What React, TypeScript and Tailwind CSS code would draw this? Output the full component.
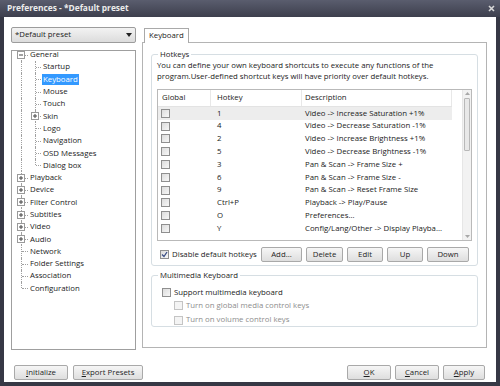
import React from "react"

const hotkeys = [
  { key: "1", desc: "Video -> Increase Saturation +1%" },
  { key: "4", desc: "Video -> Decrease Saturation -1%" },
  { key: "2", desc: "Video -> Increase Brightness +1%" },
  { key: "5", desc: "Video -> Decrease Brightness -1%" },
  { key: "3", desc: "Pan & Scan -> Frame Size +" },
  { key: "6", desc: "Pan & Scan -> Frame Size -" },
  { key: "9", desc: "Pan & Scan -> Reset Frame Size" },
  { key: "Ctrl+P", desc: "Playback -> Play/Pause" },
  { key: "O", desc: "Preferences..." },
  { key: "Y", desc: "Config/Lang/Other -> Display Playba..." },
]

type TreeItem = { label: string; level: 0 | 1; expander?: "plus" | "minus"; selected?: boolean }

const tree: TreeItem[] = [
  { label: "General", level: 0, expander: "minus" },
  { label: "Startup", level: 1 },
  { label: "Keyboard", level: 1, selected: true },
  { label: "Mouse", level: 1 },
  { label: "Touch", level: 1 },
  { label: "Skin", level: 1, expander: "plus" },
  { label: "Logo", level: 1 },
  { label: "Navigation", level: 1 },
  { label: "OSD Messages", level: 1 },
  { label: "Dialog box", level: 1 },
  { label: "Playback", level: 0, expander: "plus" },
  { label: "Device", level: 0, expander: "plus" },
  { label: "Filter Control", level: 0, expander: "plus" },
  { label: "Subtitles", level: 0, expander: "plus" },
  { label: "Video", level: 0, expander: "plus" },
  { label: "Audio", level: 0, expander: "plus" },
  { label: "Network", level: 0 },
  { label: "Folder Settings", level: 0 },
  { label: "Association", level: 0 },
  { label: "Configuration", level: 0 },
]

function Expander({ kind, left }: { kind: "plus" | "minus"; left: string }) {
  return (
    <svg width="8" height="8" viewBox="0 0 8 8" className={`absolute ${left} top-1/2 -translate-y-1/2`}>
      <rect x="0.5" y="0.5" width="7" height="7" fill="#fff" stroke="#9a9a9a" />
      <line x1="2" y1="4" x2="6" y2="4" stroke="#444" />
      {kind === "plus" && <line x1="4" y1="2" x2="4" y2="6" stroke="#444" />}
    </svg>
  )
}

function CheckBox({ checked, disabled }: { checked?: boolean; disabled?: boolean }) {
  return (
    <span
      className={`relative inline-block w-[9px] h-[9px] shrink-0 border ${
        disabled ? "border-[#c4c4c4] bg-[#f4f4f4]" : "border-[#8f8f8f] bg-gradient-to-br from-[#dcdcdc] to-[#f7f7f7]"
      }`}
    >
      {checked && (
        <svg width="7" height="7" viewBox="0 0 7 7" className="absolute left-0 top-0">
          <path d="M1 3.5 L3 5.5 L6 1" fill="none" stroke="#3b4f86" strokeWidth="1.3" />
        </svg>
      )}
    </span>
  )
}

function Button({ children, w }: { children: React.ReactNode; w: string }) {
  return (
    <button
      className={`${w} h-[15px] border border-[#a9a9a9] rounded-[2px] bg-gradient-to-b from-[#f6f6f6] to-[#dedede] text-[#1e1e1e] leading-none`}
    >
      {children}
    </button>
  )
}

function TreeRow({ item, index }: { item: TreeItem; index: number }) {
  const first = index === 0
  const last = index === tree.length - 1
  const lastChild = item.label === "Dialog box"
  return (
    <div className="flex items-center h-[12.3px]">
      <div className="relative w-[17px] h-full shrink-0">
        <span
          className={`absolute left-[9px] border-l border-dotted border-[#a0a0a0] ${first ? "top-1/2" : "top-0"} ${
            last ? "h-1/2" : "bottom-0"
          }`}
        />
        {item.level === 0 && <span className="absolute left-[10px] top-1/2 w-[6px] border-t border-dotted border-[#a0a0a0]" />}
        {item.level === 0 && item.expander && <Expander kind={item.expander} left="left-[5px]" />}
      </div>
      {item.level === 1 && (
        <div className="relative w-[13px] h-full shrink-0">
          <span
            className={`absolute left-[6px] top-0 border-l border-dotted border-[#a0a0a0] ${lastChild ? "h-1/2" : "bottom-0"}`}
          />
          <span className="absolute left-[7px] top-1/2 w-[5px] border-t border-dotted border-[#a0a0a0]" />
          {item.expander && <Expander kind={item.expander} left="left-[2px]" />}
        </div>
      )}
      <span
        className={`px-[1px] leading-[11px] whitespace-nowrap ${item.selected ? "bg-[#3399ff] text-white" : "text-[#1b1b1b]"}`}
      >
        {item.label}
      </span>
    </div>
  )
}

export default function App() {
  return (
    <div className="w-[500px] h-[386px] flex flex-col bg-[#363845] font-['Segoe_UI','Open_Sans',sans-serif] text-[7.8px] text-[#1b1b1b] overflow-hidden">
      {/* title bar */}
      <div className="h-[17px] shrink-0 flex items-center justify-between pl-[7px] pr-[5px] bg-gradient-to-b from-[#5a5d6e] to-[#3d3f4d]">
        <span className="font-bold text-[8.4px] text-[#ececec]">Preferences - *Default preset</span>
        <svg width="7" height="7" viewBox="0 0 7 7">
          <path d="M1 1 L6 6 M6 1 L1 6" stroke="#d8d8d8" strokeWidth="1.6" />
        </svg>
      </div>

      <div className="flex-1 flex flex-col mx-[4px] mb-[4px] bg-white">
        <div className="flex pt-[10px] pl-[7px] pr-[9px] h-[333px] shrink-0">
          {/* left column */}
          <div className="w-[125px] flex flex-col gap-[7px] shrink-0">
            <div className="h-[16px] flex items-center justify-between px-[3px] border border-[#9c9c9c] rounded-[2px] bg-gradient-to-b from-[#f3f3f3] to-[#dcdcdc]">
              <span>*Default preset</span>
              <svg width="6" height="4" viewBox="0 0 6 4">
                <path d="M0 0 L6 0 L3 4 Z" fill="#222" />
              </svg>
            </div>
            <div className="flex-1 border border-[#9f9f9f] bg-white overflow-hidden">
              <div className="-mt-[2.5px]">
                {tree.map((item, i) => (
                  <TreeRow key={item.label} item={item} index={i} />
                ))}
              </div>
            </div>
          </div>

          {/* right column */}
          <div className="flex-1 ml-[6px] flex flex-col">
            <div className="flex pl-[2px]">
              <div className="h-[15px] px-[4px] flex items-center border border-b-0 border-[#a9a9a9] bg-white relative top-[1px] text-[#1b1b1b]">
                Keyboard
              </div>
            </div>
            <div className="h-[306px] border border-[#b4b4b4] bg-white px-[8px] pt-[7px]">
              <fieldset className="border border-[#d6dee3] rounded-[3px] px-[5px] pb-[5px] h-[216px]">
                <legend className="px-[2px] ml-[1px] leading-[9px]">Hotkeys</legend>
                <p className="leading-[11px] mt-[1px]">
                  You can define your own keyboard shortcuts to execute any functions of the
                  <br />
                  program.User-defined shortcut keys will have priority over default hotkeys.
                </p>
                <div className="mt-[7px] h-[152px] border border-[#b9b9b9] flex">
                  <div className="flex-1 flex flex-col">
                    <div className="h-[17px] flex border-b border-[#e3e3e3] w-[294px]">
                      <div className="w-[53px] pl-[4px] flex items-center border-r border-[#e8e8e8]">Global</div>
                      <div className="w-[91px] pl-[6px] flex items-center border-r border-[#e8e8e8]">Hotkey</div>
                      <div className="flex-1 pl-[3px] flex items-center border-r border-[#e8e8e8]">Description</div>
                    </div>
                    {hotkeys.map((h, i) => (
                      <div key={h.key} className={`h-[12.8px] flex items-center w-[294px] ${i === 0 ? "bg-[#ededed]" : ""}`}>
                        <div className="w-[53px] pl-[3px] flex items-center">
                          <CheckBox />
                        </div>
                        <div className="w-[91px] pl-[6px]">{h.key}</div>
                        <div className="flex-1 pl-[3px] whitespace-nowrap">{h.desc}</div>
                      </div>
                    ))}
                  </div>
                  <div className="w-[9px] flex flex-col bg-[#f2f2f2] border-l border-[#e6e6e6]">
                    <div className="h-[7px] flex items-center justify-center">
                      <svg width="5" height="3" viewBox="0 0 5 3">
                        <path d="M0 3 L2.5 0 L5 3 Z" fill="#a8a8a8" />
                      </svg>
                    </div>
                    <div className="flex-1">
                      <div className="mt-[1px] mx-[1px] h-[53px] border border-[#b8b8b8] rounded-[1px] bg-[#e8e8e8]" />
                    </div>
                    <div className="h-[7px] flex items-center justify-center">
                      <svg width="5" height="3" viewBox="0 0 5 3">
                        <path d="M0 0 L2.5 3 L5 0 Z" fill="#a8a8a8" />
                      </svg>
                    </div>
                  </div>
                </div>
                <div className="mt-[6px] flex items-center">
                  <label className="flex items-center gap-[3px] pl-[3px]">
                    <CheckBox checked />
                    <span>Disable default hotkeys</span>
                  </label>
                  <div className="ml-auto flex gap-[4px] pr-[3px]">
                    <Button w="w-[41px]">Add...</Button>
                    <Button w="w-[37px]">Delete</Button>
                    <Button w="w-[36px]">Edit</Button>
                    <Button w="w-[36px]">Up</Button>
                    <Button w="w-[42px]">Down</Button>
                  </div>
                </div>
              </fieldset>

              <fieldset className="mt-[5px] border border-[#d6dee3] rounded-[3px] px-[10px] h-[56px]">
                <legend className="px-[2px] -ml-[4px] leading-[9px]">Multimedia Keyboard</legend>
                <label className="flex items-center gap-[3px] mt-[7px]">
                  <CheckBox />
                  <span>Support multimedia keyboard</span>
                </label>
                <label className="flex items-center gap-[3px] mt-[1px] pl-[12px] text-[#8d8d8d]">
                  <CheckBox disabled />
                  <span>Turn on global media control keys</span>
                </label>
                <label className="flex items-center gap-[3px] mt-[3px] pl-[12px] text-[#8d8d8d]">
                  <CheckBox disabled />
                  <span>Turn on volume control keys</span>
                </label>
              </fieldset>
            </div>
          </div>
        </div>

        {/* bottom buttons */}
        <div className="flex items-start pl-[10px] pr-[11px] pt-[15px]">
          <div className="flex gap-[5px]">
            <Button w="w-[54px]">
              <span className="underline">I</span>nitialize
            </Button>
            <Button w="w-[70px]">
              <span className="underline">E</span>xport Presets
            </Button>
          </div>
          <div className="ml-auto flex gap-[4px]">
            <Button w="w-[44px]">
              <span className="underline">O</span>K
            </Button>
            <Button w="w-[44px]">
              <span className="underline">C</span>ancel
            </Button>
            <Button w="w-[42px]">
              <span className="underline">A</span>pply
            </Button>
          </div>
        </div>
      </div>
    </div>
  )
}
